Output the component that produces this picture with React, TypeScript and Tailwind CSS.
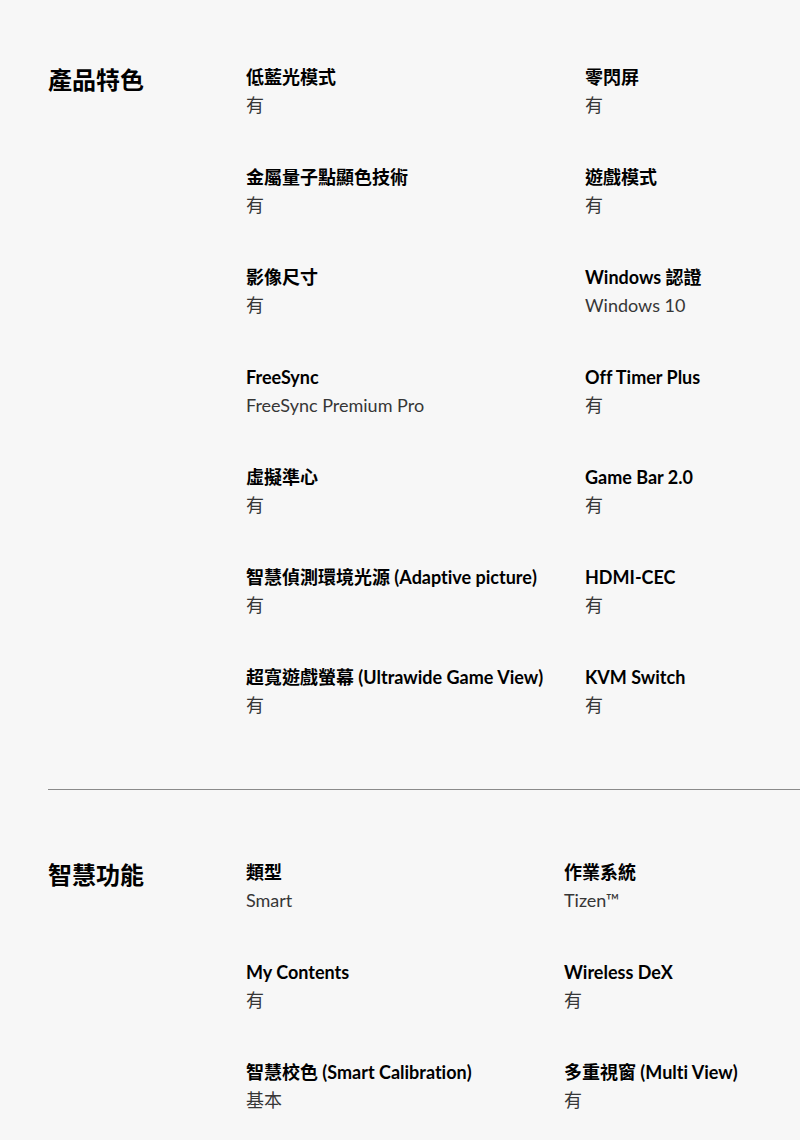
import React from "react";

type Item = { label: string; value: string };

const sec1: Item[][] = [
  [
    { label: "低藍光模式", value: "有" },
    { label: "零閃屏", value: "有" },
  ],
  [
    { label: "金屬量子點顯色技術", value: "有" },
    { label: "遊戲模式", value: "有" },
  ],
  [
    { label: "影像尺寸", value: "有" },
    { label: "Windows 認證", value: "Windows 10" },
  ],
  [
    { label: "FreeSync", value: "FreeSync Premium Pro" },
    { label: "Off Timer Plus", value: "有" },
  ],
  [
    { label: "虛擬準心", value: "有" },
    { label: "Game Bar 2.0", value: "有" },
  ],
  [
    { label: "智慧偵測環境光源 (Adaptive picture)", value: "有" },
    { label: "HDMI-CEC", value: "有" },
  ],
  [
    { label: "超寬遊戲螢幕 (Ultrawide Game View)", value: "有" },
    { label: "KVM Switch", value: "有" },
  ],
];

const sec2: Item[][] = [
  [
    { label: "類型", value: "Smart" },
    { label: "作業系統", value: "Tizen™" },
  ],
  [
    { label: "My Contents", value: "有" },
    { label: "Wireless DeX", value: "有" },
  ],
  [
    { label: "智慧校色 (Smart Calibration)", value: "基本" },
    { label: "多重視窗 (Multi View)", value: "有" },
  ],
];

function Cell({ item }: { item: Item }) {
  return (
    <div className="flex flex-col">
      <div className="text-[18px] leading-[28px] font-bold text-black">{item.label}</div>
      <div className="text-[18px] leading-[28px] font-normal text-[#363636]">{item.value}</div>
    </div>
  );
}

function Section({
  title,
  rows,
  col1,
  className,
}: {
  title: string;
  rows: Item[][];
  col1: string;
  className: string;
}) {
  return (
    <div className={"flex " + className}>
      <div className="w-[198px] shrink-0 text-[24px] leading-[34px] font-bold text-black">
        {title}
      </div>
      <div className="flex flex-col gap-[44px]">
        {rows.map((r, i) => (
          <div key={i} className="flex">
            <div className={col1 + " shrink-0"}>
              <Cell item={r[0]} />
            </div>
            <div>
              <Cell item={r[1]} />
            </div>
          </div>
        ))}
      </div>
    </div>
  );
}

export default function App() {
  return (
    <div
      className="w-[800px] h-[1140px] overflow-hidden bg-[#f7f7f7] pl-[48px] [font-variant-ligatures:none]"
      style={{ fontFamily: 'Lato, "Noto Sans CJK TC", sans-serif' }}
    >
      <Section title="產品特色" rows={sec1} col1="w-[339px]" className="pt-[63px] pb-[70px]" />
      <div className="h-px bg-[#8a8a8a]" />
      <Section title="智慧功能" rows={sec2} col1="w-[318px]" className="pt-[68px]" />
    </div>
  );
}
